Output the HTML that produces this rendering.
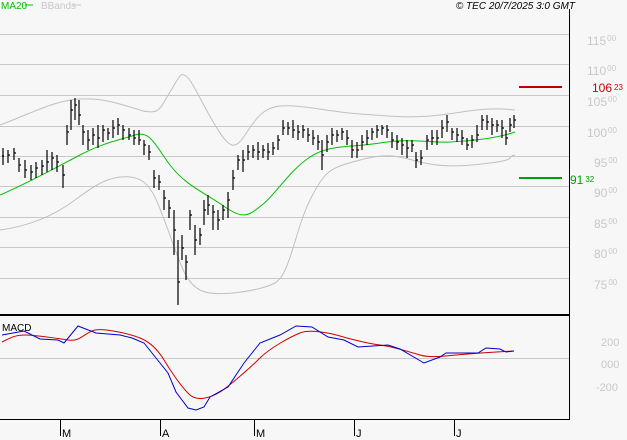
<!DOCTYPE html>
<html><head><meta charset="utf-8"><style>
html,body{margin:0;padding:0;background:#f7f7f7;}
svg{display:block;font-family:"Liberation Sans",sans-serif;}
</style></head><body>
<svg width="627" height="440" viewBox="0 0 627 440" xmlns="http://www.w3.org/2000/svg">
<rect width="627" height="440" fill="#f7f7f7"/>
<g stroke="#c8c8c8" stroke-width="1">
<path d="M0 34.5H569M0 64.5H569M0 95.5H569M0 126.5H569M0 156.5H569M0 186.5H569M0 217.5H569M0 247.5H569M0 278.5H569M0 358.5H569"/>
</g>
<g fill="#c8c8c8" font-size="12">
<text x="587" y="45">115<tspan font-size="8" dx="1" dy="-4">00</tspan></text>
<text x="587" y="75">110<tspan font-size="8" dx="1" dy="-4">00</tspan></text>
<text x="587" y="106">105<tspan font-size="8" dx="1" dy="-4">00</tspan></text>
<text x="587" y="137">100<tspan font-size="8" dx="1" dy="-4">00</tspan></text>
<text x="594" y="167">95<tspan font-size="8" dx="1" dy="-4">00</tspan></text>
<text x="594" y="197">90<tspan font-size="8" dx="1" dy="-4">00</tspan></text>
<text x="594" y="228">85<tspan font-size="8" dx="1" dy="-4">00</tspan></text>
<text x="594" y="258">80<tspan font-size="8" dx="1" dy="-4">00</tspan></text>
<text x="594" y="289">75<tspan font-size="8" dx="1" dy="-4">00</tspan></text>
<text x="601" y="346" font-size="11">200</text>
<text x="601" y="368" font-size="11">000</text>
<text x="596" y="391" font-size="11">-200</text>
</g>
<g fill="none" stroke="#c0c0c0" stroke-width="1">
<path d="M0 125C30 114 55 100 80 99S120 104 140 110S160 108 170 92S180 72 186 76S200 100 215 125S235 150 245 135S262 108 280 106S330 112 360 114S400 118 430 116S480 106 515 110"/>
<path d="M0 230C30 226 55 215 75 200S110 175 130 177S155 195 168 230S185 282 200 290S260 291 275 283S295 230 310 200S330 168 360 160S400 157 420 162S460 167 490 163S505 157 515 155"/>
</g>
<path fill="none" stroke="#00c000" stroke-width="1" d="M0 195C30 182 55 168 80 155S120 140 135 135S155 145 170 165S205 193 225 207S250 214 262 205S290 170 310 157S350 148 380 143S430 143 450 142S495 139 515 132"/>
<path fill="none" stroke="#000" stroke-width="1.2" d="
M3 148V165M2 156h2M8 150V163M8 155h2M14 148V160M14 153h2M19 158V172M19 165h2M25 160V178M25 170h2M31 165V180M31 172h2M36 162V178M36 168h2M42 160V175M42 166h2M47 150V172M47 162h2M52 152V170M52 158h2M57 155V172M57 162h2M63 165V188M63 175h2M67 125V145M67 132h2M71 100V130M71 110h2M75 98V120M75 105h2M79 100V125M79 115h2M83 125V145M83 132h2M88 130V150M88 140h2M93 128V145M93 135h2M98 125V148M98 138h2M103 125V142M103 130h2M108 128V140M108 133h2M113 120V138M113 128h2M118 118V135M118 125h2M123 125V140M123 130h2M129 128V140M129 135h2M134 130V145M134 138h2M139 130V145M139 140h2M144 140V155M144 145h2M149 145V160M149 152h2M154 170V188M154 178h2M159 175V190M159 182h2M164 190V210M164 198h2M169 200V218M169 208h2M174 210V255M174 230h2M178 240V305M178 282h2M182 235V260M182 248h2M186 255V280M186 262h2M190 210V230M190 215h2M195 225V255M195 240h2M200 228V245M200 235h2M204 200V225M204 210h2M208 195V215M208 205h2M213 205V230M213 212h2M218 210V230M218 220h2M223 205V220M223 210h2M228 192V218M228 200h2M233 170V190M233 178h2M238 155V170M238 160h2M243 150V172M243 160h2M248 145V160M248 152h2M253 145V158M253 150h2M258 142V160M258 152h2M263 145V158M263 150h2M268 143V160M268 152h2M273 142V155M273 148h2M278 135V150M278 140h2M283 120V135M283 128h2M288 122V135M288 128h2M293 120V138M293 130h2M298 125V140M298 132h2M303 125V138M303 130h2M308 128V142M308 135h2M313 130V145M313 138h2M318 135V150M318 142h2M322 140V170M322 155h2M327 135V152M327 142h2M332 128V145M332 135h2M337 130V142M337 135h2M342 128V140M342 132h2M347 130V145M347 138h2M352 140V158M352 150h2M357 142V158M357 150h2M362 135V150M362 142h2M367 130V145M367 138h2M372 128V140M372 132h2M377 125V138M377 130h2M382 125V135M382 128h2M387 125V138M387 130h2M392 132V148M392 140h2M397 135V150M397 142h2M402 138V155M402 145h2M407 140V158M407 148h2M412 140V152M412 145h2M416 152V168M416 160h2M421 150V165M421 158h2M427 135V150M427 140h2M432 130V145M432 138h2M437 130V145M437 138h2M442 120V138M442 128h2M447 115V132M447 122h2M452 128V140M452 132h2M457 128V142M457 135h2M462 130V145M462 138h2M467 138V150M467 145h2M472 135V148M472 140h2M477 125V142M477 135h2M482 115V130M482 120h2M487 115V130M487 122h2M492 118V135M492 125h2M497 120V132M497 125h2M502 120V138M502 128h2M506 130V145M506 138h2M510 118V132M510 125h2M514 115V128M514 120h2"/>
<path d="M519 87H562" stroke="#c00000" stroke-width="2"/>
<text x="592" y="92" fill="#d00000" font-size="12">106<tspan font-size="8" dx="2" dy="-2">23</tspan></text>
<path d="M519 178H562" stroke="#00a000" stroke-width="2"/>
<text x="570" y="184" fill="#00a000" font-size="12">91<tspan font-size="8" dx="2" dy="-2">32</tspan></text>
<path d="M569.5 9V420" stroke="#000" stroke-width="1"/>
<path d="M0 315H569" stroke="#000" stroke-width="2"/>
<path d="M0 419.5H569" stroke="#000" stroke-width="1"/>
<path fill="none" stroke="#d00000" stroke-width="1" d="M2 342C10 338 15 335 25 335S55 338 68 340S85 332 95 330S130 334 140 338S158 350 164 360S182 388 190 395S212 397 220 392S250 368 260 358S290 337 300 333S330 333 340 336S370 344 380 345S410 352 420 355S445 356 456 355S495 352 514 351"/>
<polyline fill="none" stroke="#0000d0" stroke-width="1" points="2,335 24,331 40,339 58,340 64,343 78,326 96,333 120,335 132,338 144,343 156,358 168,373 176,392 188,408 196,410 204,407 210,397 228,387 244,363 260,343 280,335 296,326 312,327 328,337 344,340 358,347 388,345 400,349 424,363 440,357 446,353 464,353 478,353 486,348 500,349 506,352 514,351"/>
<text x="2" y="331" font-size="10" fill="#000">MACD</text>
<path d="M60.5 420V436M160.5 420V436M254.5 420V436M354.5 420V436M454.5 420V436" stroke="#000"/>
<g font-size="11" fill="#000">
<text x="62" y="437">M</text><text x="162" y="437">A</text><text x="256" y="437">M</text><text x="356" y="437">J</text><text x="456" y="437">J</text>
</g>
<text x="1" y="9" font-size="10" fill="#00c000">MA20</text>
<path d="M25 5H33" stroke="#00c000"/>
<text x="41" y="9" font-size="10" fill="#c8c8c8">BBands</text>
<path d="M73 5H81" stroke="#c8c8c8"/>
<text x="575" y="9" font-size="10" font-style="italic" fill="#000" text-anchor="end">© TEC 20/7/2025 3:0 GMT</text>
</svg>
</body></html>
